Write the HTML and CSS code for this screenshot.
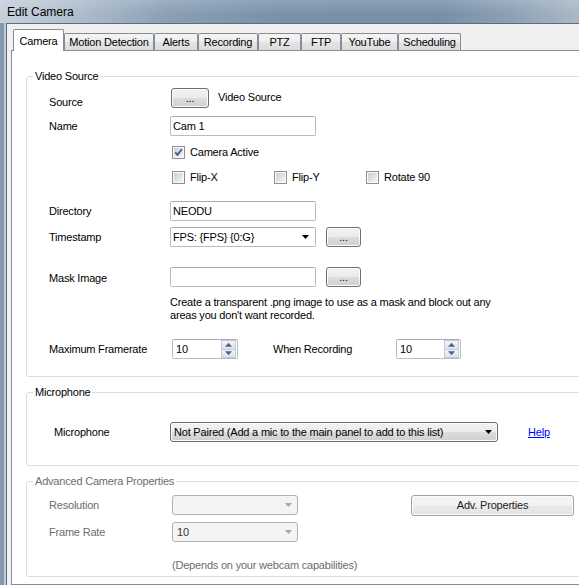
FILE: index.html
```html
<!DOCTYPE html>
<html>
<head>
<meta charset="utf-8">
<title>Edit Camera</title>
<link rel="stylesheet" href="styles.css">
</head>
<body>
<div class="window">
  <div class="titlebar">Edit Camera</div>
  <div class="frame">
    <div class="frame-edge"></div>
    <div class="dialog">
      <div class="tabs">
        <div class="tab tab-active w-camera">Camera</div>
        <div class="tab w-motion">Motion Detection</div>
        <div class="tab w-alerts">Alerts</div>
        <div class="tab w-recording">Recording</div>
        <div class="tab w-ptz">PTZ</div>
        <div class="tab w-ftp">FTP</div>
        <div class="tab w-youtube">YouTube</div>
        <div class="tab w-sched">Scheduling</div>
      </div>
      <div class="panel">
        <fieldset class="group">
          <legend>Video Source</legend>
          <div class="group-body body-video">
            <div class="row row-source">
              <span class="lbl lbl-low">Source</span>
              <button class="btn btn-source">...</button>
              <span class="source-text">Video Source</span>
            </div>
            <div class="row row-name">
              <span class="lbl">Name</span>
              <div class="textbox w-field">Cam 1</div>
            </div>
            <div class="row-check row-active">
              <span class="check-item">
                <span class="cb"><svg class="tick" width="9" height="9" viewBox="0 0 9 9"><path d="M1.3 4.3 L3.6 6.9 L7.8 1.2" fill="none" stroke="#44598a" stroke-width="1.8"/></svg></span>
                <span class="cb-text">Camera Active</span>
              </span>
            </div>
            <div class="row-check row-flip">
              <span class="check-item ci-1"><span class="cb"></span><span class="cb-text">Flip-X</span></span>
              <span class="check-item ci-2"><span class="cb"></span><span class="cb-text">Flip-Y</span></span>
              <span class="check-item"><span class="cb"></span><span class="cb-text">Rotate 90</span></span>
            </div>
            <div class="row row-dir">
              <span class="lbl">Directory</span>
              <div class="textbox w-field">NEODU</div>
            </div>
            <div class="row row-ts">
              <span class="lbl">Timestamp</span>
              <div class="combo w-field"><span class="combo-text">FPS: {FPS} {0:G}</span><span class="arrow"></span></div>
              <button class="btn btn-small">...</button>
            </div>
            <div class="row row-mask">
              <span class="lbl lbl-mask">Mask Image</span>
              <div class="textbox w-field"></div>
              <button class="btn btn-small btn-up">...</button>
            </div>
            <p class="hint">Create a transparent .png image to use as a mask and block out any<br>areas you don't want recorded.</p>
            <div class="row row-fps">
              <span class="lbl">Maximum Framerate</span>
              <div class="spin spin-1">
                <span class="spin-text">10</span>
                <span class="spin-btns"><span class="spin-b"><span class="tri-up"></span></span><span class="spin-b"><span class="tri-down"></span></span></span>
              </div>
              <span class="when">When Recording</span>
              <div class="spin spin-2">
                <span class="spin-text">10</span>
                <span class="spin-btns"><span class="spin-b"><span class="tri-up"></span></span><span class="spin-b"><span class="tri-down"></span></span></span>
              </div>
            </div>
          </div>
        </fieldset>

        <fieldset class="group group-mic">
          <legend>Microphone</legend>
          <div class="group-body body-mic">
            <div class="row row-mic">
              <span class="lbl lbl-mic">Microphone</span>
              <div class="combo combo-list w-mic"><span class="combo-text">Not Paired (Add a mic to the main panel to add to this list)</span><span class="arrow"></span></div>
              <a class="help" href="#">Help</a>
            </div>
          </div>
        </fieldset>

        <fieldset class="group group-adv">
          <legend class="legend-dis">Advanced Camera Properties</legend>
          <div class="group-body body-adv">
            <div class="row row-res">
              <span class="lbl dis">Resolution</span>
              <div class="combo combo-dis w-adv"><span class="combo-text"></span><span class="arrow arrow-dis"></span></div>
              <button class="btn btn-adv">Adv. Properties</button>
            </div>
            <div class="row row-rate">
              <span class="lbl dis">Frame Rate</span>
              <div class="combo combo-dis w-adv"><span class="combo-text">10</span><span class="arrow arrow-dis"></span></div>
            </div>
            <p class="hint hint-dis">(Depends on your webcam capabilities)</p>
          </div>
        </fieldset>
      </div>
    </div>
  </div>
</div>
</body>
</html>
```
FILE: styles.css
```css
* { box-sizing: border-box; }
html, body { margin: 0; padding: 0; }
body {
  width: 579px;
  height: 585px;
  overflow: hidden;
  background: #f0f0f0;
  font-family: "Liberation Sans", Arial, sans-serif;
  font-size: 11px;
  letter-spacing: -0.2px;
  color: #000;
}
.window {
  width: 579px;
  height: 585px;
  overflow: hidden;
  display: flex;
  flex-direction: column;
}
.titlebar {
  flex: none;
  height: 23px;
  padding: 1px 0 0 7px;
  line-height: 22px;
  font-size: 12px;
  letter-spacing: 0;
  color: #000;
  background:
    linear-gradient(to bottom, rgba(255,255,255,0.16), rgba(255,255,255,0) 60%),
    linear-gradient(to right, #c5d0db 0px, #b0bfcd 70px, #8a9fb5 170px, #7a91a9 280px, #778fa8 440px, #8da1b5 510px, #a9b8c6 579px);
}
.frame {
  flex: 1;
  display: flex;
  min-height: 0;
}
.frame-edge {
  flex: none;
  width: 7px;
  border-right: 1px solid #5d6d80;
  background: linear-gradient(to right, #8398ae 0, #8398ae 4px, #c3cdd8 4px, #c3cdd8 6px);
}
.dialog {
  flex: 1;
  min-width: 0;
  display: flex;
  flex-direction: column;
  border-top: 1px solid #5d6d80;
  background: #f0f0f0;
  padding-left: 4px;
}
.tabs {
  flex: none;
  height: 26px;
  display: flex;
  align-items: flex-end;
  padding-left: 2px;
}
.tab {
  flex: none;
  height: 17px;
  border: 1px solid #898c95;
  border-bottom: none;
  border-radius: 2px 2px 0 0;
  text-align: center;
  line-height: 16px;
  white-space: nowrap;
  background: linear-gradient(#f4f4f4, #ededed 50%, #e3e3e3 50%, #dcdcdc);
}
.tab-active {
  height: 22px;
  margin-bottom: -1px;
  padding-top: 3px;
  background: #fff;
  position: relative;
  z-index: 1;
}
.w-camera { width: 51px; }
.w-motion { width: 90px; }
.w-alerts { width: 44px; }
.w-recording { width: 60px; }
.w-ptz { width: 43px; }
.w-ftp { width: 40px; }
.w-youtube { width: 57px; }
.w-sched { width: 63px; }

.panel {
  flex: 1;
  min-width: 0;
  overflow: hidden;
  background: #fff;
  border: 1px solid #898c95;
  border-right: none;
  padding: 19px 0 0 14px;
}
.group {
  margin: 0 -20px 0 0;
  min-width: 0;
  border: 1px solid #d5dfe5;
  border-radius: 3px;
  padding: 0 0 0 6px;
}
.group legend {
  padding: 0 2px;
  line-height: 13px;
  height: 13px;
}
.group-mic, .group-adv { margin-top: 9px; }
.group-body { padding-left: 16px; }
.body-video { padding-bottom: 17px; }
.body-mic { padding-bottom: 23px; }
.body-adv { padding-bottom: 4px; }

.row {
  display: flex;
  align-items: center;
  height: 20px;
}
.lbl {
  flex: none;
  width: 121px;
  line-height: 13px;
  white-space: nowrap;
}
.lbl-low { padding-top: 8px; }
.lbl-mask { padding-top: 2px; }
.lbl-mic { padding-left: 5px; }
.dis, .legend-dis { color: #6d6d6d; }

.row-source { margin-top: 5px; }
.row-name { margin-top: 8px; }
.row-active { margin-top: 10px; }
.row-flip { margin-top: 12px; }
.row-dir { margin-top: 17px; }
.row-ts { margin-top: 6px; }
.row-mask { margin-top: 20px; }
.row-fps { margin-top: 17px; }
.row-mic { margin-top: 23px; }
.row-res { margin-top: 7px; }
.row-rate { margin-top: 7px; }

.btn {
  flex: none;
  height: 20px;
  padding: 0;
  border: 1px solid #707070;
  border-radius: 3px;
  background: linear-gradient(#f2f2f2 0%, #ebebeb 50%, #dddddd 51%, #cfcfcf 100%);
  box-shadow: inset 0 0 0 1px #fbfbfb;
  font-family: inherit;
  font-size: 11px;
  letter-spacing: -0.2px;
  color: #000;
  line-height: 16px;
}
.btn-source { width: 38px; margin-left: 1px; }
.btn-small { width: 35px; margin-left: 10px; }
.btn-up { margin-top: -1px; }
.btn-adv {
  width: 163px;
  height: 21px;
  margin-left: 113px;
  border-color: #a3a3a3;
  background: linear-gradient(#f6f6f6 0%, #f1f1f1 50%, #e9e9e9 51%, #e4e4e4 100%);
  color: #222;
}
.source-text { margin-left: 9px; margin-top: -2px; }

.textbox, .combo {
  flex: none;
  height: 20px;
  border: 1px solid #b9bcc3;
  border-top-color: #abadb3;
  border-radius: 2px;
  background: #fff;
  padding-left: 2px;
  line-height: 18px;
  white-space: nowrap;
  display: flex;
  align-items: center;
}
.w-field { width: 146px; }
.combo-text { flex: 1; overflow: hidden; }
.arrow {
  flex: none;
  width: 7px;
  height: 4px;
  margin-right: 6px;
  background: #000;
  clip-path: polygon(0 0, 100% 0, 50% 100%);
}
.combo-list {
  width: 328px;
  border: 1px solid #707070;
  border-radius: 3px;
  padding-left: 3px;
  background: linear-gradient(#f2f2f2 0%, #ebebeb 50%, #dddddd 51%, #cfcfcf 100%);
  box-shadow: inset 0 0 0 1px #fbfbfb;
}
.combo-list .arrow { margin-right: 5px; }
.combo-dis {
  width: 126px;
  margin-left: 2px;
  border: 1px solid #adb2b5;
  border-radius: 3px;
  background: #f4f4f4;
  padding-left: 4px;
  color: #333;
}
.arrow-dis { background: #a6a6a6; margin-right: 5px; }
.help {
  margin-left: 30px;
  color: #0000ff;
  text-decoration: underline;
}

.row-check {
  display: flex;
  align-items: center;
  height: 13px;
  padding-left: 123px;
}
.check-item {
  display: flex;
  align-items: center;
  flex: none;
}
.ci-1 { width: 102px; }
.ci-2 { width: 92px; }
.cb {
  flex: none;
  width: 13px;
  height: 13px;
  border: 1px solid #8e8f8f;
  padding: 1px;
  display: flex;
  background:
    linear-gradient(135deg, #cbced3, #f6f6f6) content-box,
    linear-gradient(#fafafa, #fafafa) padding-box;
}
.tick { display: block; }
.cb-text { margin-left: 5px; line-height: 13px; }

.hint {
  margin: 9px 0 0 0;
  padding-left: 121px;
  line-height: 13px;
}
.hint-dis {
  margin-top: 17px;
  padding-left: 123px;
  color: #6d6d6d;
}

.spin {
  flex: none;
  height: 20px;
  border: 1px solid #b9bcc3;
  border-top-color: #abadb3;
  border-radius: 2px;
  display: flex;
  align-items: center;
}
.spin-1 { width: 66px; margin-left: 2px; }
.spin-2 { width: 65px; }
.spin-text { flex: 1; padding-left: 3px; line-height: 18px; }
.spin-btns {
  flex: none;
  width: 15px;
  height: 18px;
  margin-right: 1px;
  display: flex;
  flex-direction: column;
}
.spin-b {
  flex: 1;
  border: 1px solid #c2cad8;
  background: linear-gradient(#f2f4f9, #dde3ee);
  display: flex;
  align-items: center;
  justify-content: center;
}
.spin-b + .spin-b { border-top: none; }
.tri-up, .tri-down {
  width: 7px;
  height: 4px;
  background: #4e6189;
}
.tri-up { clip-path: polygon(50% 0, 100% 100%, 0 100%); }
.tri-down { clip-path: polygon(0 0, 100% 0, 50% 100%); }
.when { flex: none; width: 123px; margin-left: 35px; }
```
